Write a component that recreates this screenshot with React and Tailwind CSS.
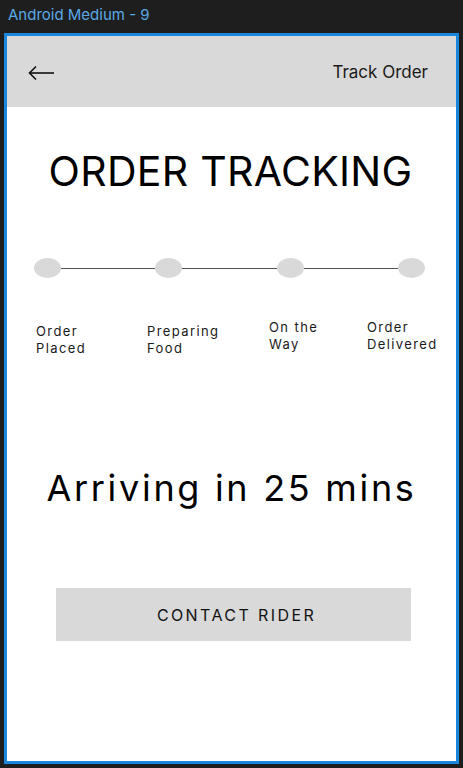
export default function App() {
  const steps = [
    { top: 'Order', bottom: 'Placed', cls: 'w-[111px] mt-[45px]' },
    { top: 'Preparing', bottom: 'Food', cls: 'w-[122px] mt-[45px]' },
    { top: 'On the', bottom: 'Way', cls: 'w-[98px] mt-[41px]' },
    { top: 'Order', bottom: 'Delivered', cls: 'mt-[41px]' },
  ];

  return (
    <div className="w-[463px] h-[768px] bg-[#1e1e1e] flex flex-col font-['Inter',sans-serif] overflow-hidden">
      {/* Figma frame label */}
      <div className="h-[33px] pl-[8px] pt-[5px] text-[15px] leading-[20px] text-[#5aa9e6]">
        Android Medium - 9
      </div>

      <div className="mx-[4px] w-[455px] h-[731px] border-[3px] border-[#1a86dc] bg-white flex flex-col">
        {/* Top bar */}
        <div className="h-[71px] bg-[#d9d9d9] flex items-center justify-between pl-[21px] pr-[28px] pt-[2px] shrink-0">
          <svg width="27" height="16" viewBox="0 0 27 16" fill="none" stroke="#111" strokeWidth="1.6">
            <path d="M1.5 8H26" />
            <path d="M8 1.5L1.5 8L8 14.5" />
          </svg>
          <span className="text-[17px] text-[#1a1a1a]">Track Order</span>
        </div>

        <h1 className="mt-[40px] text-center text-[41px] leading-[48px] text-black tracking-[0.3px] pr-[2px]">
          ORDER TRACKING
        </h1>

        {/* Progress steps */}
        <div className="mt-[63px] ml-[27px] w-[391px] flex items-center">
          <div className="w-[27px] h-[20px] rounded-[50%] bg-[#d9d9d9] shrink-0" />
          <div className="flex-1 h-px bg-[#555]" />
          <div className="w-[27px] h-[20px] rounded-[50%] bg-[#d9d9d9] shrink-0" />
          <div className="flex-1 h-px bg-[#555]" />
          <div className="w-[27px] h-[20px] rounded-[50%] bg-[#d9d9d9] shrink-0" />
          <div className="flex-1 h-px bg-[#555]" />
          <div className="w-[27px] h-[20px] rounded-[50%] bg-[#d9d9d9] shrink-0" />
        </div>

        <div className="flex items-start pl-[29px] h-[80px]">
          {steps.map((s, i) => (
            <div key={i} className={`${s.cls} shrink-0 text-[13px] leading-[17px] tracking-[1.4px] text-[#1a1a1a]`}>
              <div>{s.top}</div>
              <div>{s.bottom}</div>
            </div>
          ))}
        </div>

        <p className="mt-[108px] text-center text-[36px] leading-[44px] tracking-[2.7px] text-black">
          Arriving in 25 mins
        </p>

        <button className="mt-[78px] ml-[49px] w-[355px] h-[53px] bg-[#d9d9d9] pl-[6px] text-[16px] tracking-[2.4px] text-[#111]">
          CONTACT RIDER
        </button>
      </div>
    </div>
  );
}
